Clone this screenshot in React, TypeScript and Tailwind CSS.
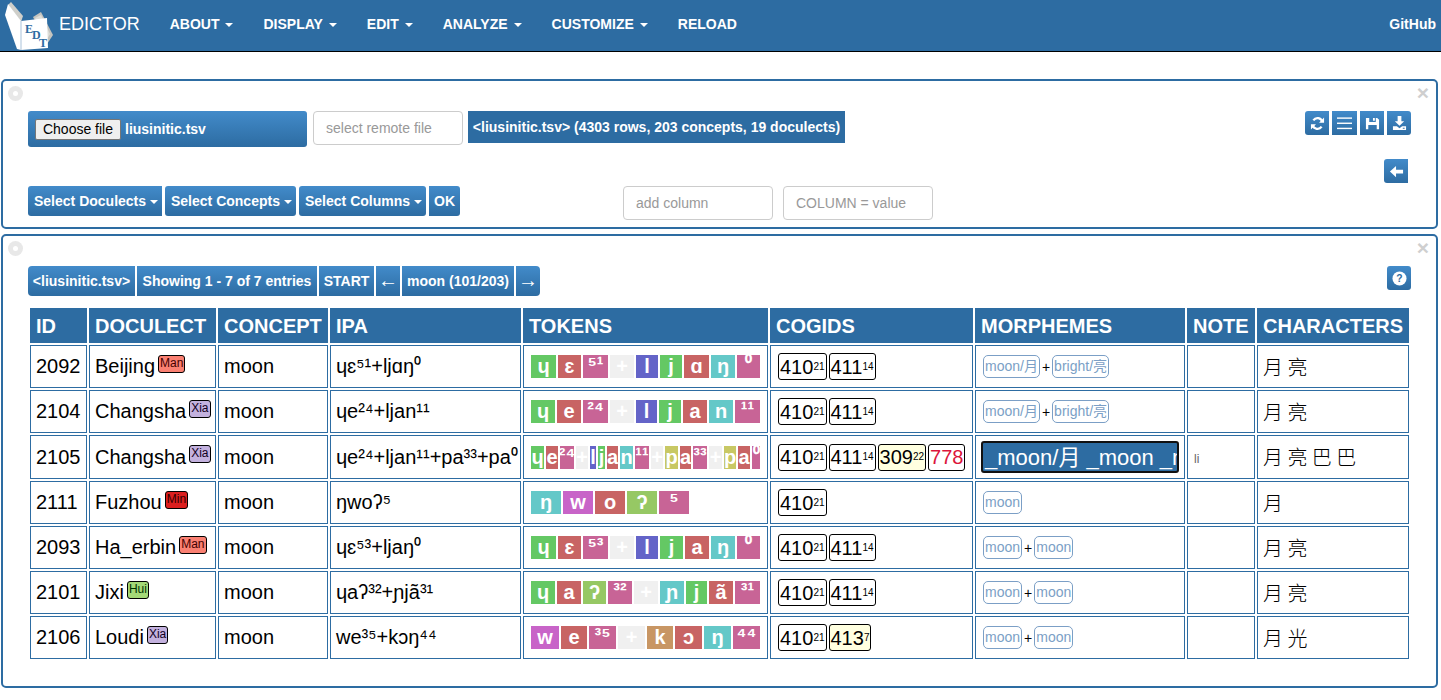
const navItems = [
  { label: "ABOUT", caret: true },
  { label: "DISPLAY", caret: true },
  { label: "EDIT", caret: true },
  { label: "ANALYZE", caret: true },
  { label: "CUSTOMIZE", caret: true },
  { label: "RELOAD", caret: false },
];

const GRAD = "bg-gradient-to-b from-[#428bca] to-[#2d6ca2]";

const GREEN = "bg-[#64c864]";
const RED = "bg-[#c86464]";
const PINK = "bg-[#c86496]";
const GREY = "bg-[#f0f0f0]";
const BLUE = "bg-[#6464c8]";
const TEAL = "bg-[#64c8c8]";
const PURPLE = "bg-[#c864c8]";
const LIME = "bg-[#96c864]";
const OLIVE = "bg-[#c8c864]";
const TAN = "bg-[#c89664]";

type Token = [string, string, string];

type Row = {
  id: number;
  doculect: string;
  badge: string;
  badgeClass: string;
  ipa: string;
  tokens: Token[];
  cogids: { n: string; sup?: string; box?: string }[];
  morphemes: string[] | null;
  note?: string;
  chars: string;
};

const MAN = "bg-[#fa8072] text-[#400]";
const XIA = "bg-[#c3b1de] text-[#102]";
const MIN = "bg-[#dc1f1f] text-[#300]";
const HUI = "bg-[#a4d977] text-[#030]";

const cog410 = { n: "410", sup: "21" };
const cog411 = { n: "411", sup: "14" };

const rows: Row[] = [
  {
    id: 2092,
    doculect: "Beijing",
    badge: "Man",
    badgeClass: MAN,
    ipa: "ɥɛ⁵¹+ljɑŋ⁰",
    tokens: [
      ["ɥ", GREEN, "w-[25px]"], ["ɛ", RED, "w-[23px]"], ["⁵¹", PINK, "w-[25px]"], ["+", GREY, "w-[24px]"],
      ["l", BLUE, "w-[22px]"], ["j", GREEN, "w-[22px]"], ["ɑ", RED, "w-[25px]"], ["ŋ", TEAL, "w-[24px]"], ["⁰", PINK, "w-[23px]"],
    ],
    cogids: [cog410, cog411],
    morphemes: ["moon/月", "bright/亮"],
    chars: "月 亮",
  },
  {
    id: 2104,
    doculect: "Changsha",
    badge: "Xia",
    badgeClass: XIA,
    ipa: "ɥe²⁴+ljan¹¹",
    tokens: [
      ["ɥ", GREEN, "w-[24px]"], ["e", RED, "w-[24px]"], ["²⁴", PINK, "w-[25px]"], ["+", GREY, "w-[24px]"],
      ["l", BLUE, "w-[21px]"], ["j", GREEN, "w-[22px]"], ["a", RED, "w-[24px]"], ["n", TEAL, "w-[24px]"], ["¹¹", PINK, "w-[25px]"],
    ],
    cogids: [cog410, cog411],
    morphemes: ["moon/月", "bright/亮"],
    chars: "月 亮",
  },
  {
    id: 2105,
    doculect: "Changsha",
    badge: "Xia",
    badgeClass: XIA,
    ipa: "ɥe²⁴+ljan¹¹+pa³³+pa⁰",
    tokens: [
      ["ɥ", GREEN, "w-[13px]"], ["e", RED, "w-[12px]"], ["²⁴", PINK, "w-[14px]"], ["+", GREY, "w-[12px]"],
      ["l", BLUE, "w-[6px]"], ["j", GREEN, "w-[7px]"], ["a", RED, "w-[11px]"], ["n", TEAL, "w-[13px]"], ["¹¹", PINK, "w-[14px]"],
      ["+", GREY, "w-[12px]"], ["p", OLIVE, "w-[13px]"], ["a", RED, "w-[11px]"], ["³³", PINK, "w-[14px]"], ["+", GREY, "w-[13px]"],
      ["p", OLIVE, "w-[12px]"], ["a", RED, "w-[12px]"], ["⁰", PINK, "w-[8px]"],
    ],
    cogids: [cog410, cog411, { n: "309", sup: "22", box: "bg-[#ffffe0]" }, { n: "778", box: "text-[#dc143c]" }],
    morphemes: null,
    note: "li",
    chars: "月 亮 巴 巴",
  },
  {
    id: 2111,
    doculect: "Fuzhou",
    badge: "Min",
    badgeClass: MIN,
    ipa: "ŋwoʔ⁵",
    tokens: [
      ["ŋ", TEAL, "w-[30px]"], ["w", PURPLE, "w-[30px]"], ["o", RED, "w-[30px]"], ["ʔ", LIME, "w-[30px]"], ["⁵", PINK, "w-[30px]"],
    ],
    cogids: [cog410],
    morphemes: ["moon"],
    chars: "月",
  },
  {
    id: 2093,
    doculect: "Ha_erbin",
    badge: "Man",
    badgeClass: MAN,
    ipa: "ɥɛ⁵³+ljaŋ⁰",
    tokens: [
      ["ɥ", GREEN, "w-[25px]"], ["ɛ", RED, "w-[23px]"], ["⁵³", PINK, "w-[25px]"], ["+", GREY, "w-[24px]"],
      ["l", BLUE, "w-[22px]"], ["j", GREEN, "w-[23px]"], ["a", RED, "w-[24px]"], ["ŋ", TEAL, "w-[24px]"], ["⁰", PINK, "w-[23px]"],
    ],
    cogids: [cog410, cog411],
    morphemes: ["moon", "moon"],
    chars: "月 亮",
  },
  {
    id: 2101,
    doculect: "Jixi",
    badge: "Hui",
    badgeClass: HUI,
    ipa: "ɥaʔ³²+ɲjã³¹",
    tokens: [
      ["ɥ", GREEN, "w-[24px]"], ["a", RED, "w-[24px]"], ["ʔ", LIME, "w-[23px]"], ["³²", PINK, "w-[24px]"], ["+", GREY, "w-[24px]"],
      ["ɲ", TEAL, "w-[24px]"], ["j", GREEN, "w-[21px]"], ["ã", RED, "w-[24px]"], ["³¹", PINK, "w-[25px]"],
    ],
    cogids: [cog410, cog411],
    morphemes: ["moon", "moon"],
    chars: "月 亮",
  },
  {
    id: 2106,
    doculect: "Loudi",
    badge: "Xia",
    badgeClass: XIA,
    ipa: "we³⁵+kɔŋ⁴⁴",
    tokens: [
      ["w", PURPLE, "w-[28px]"], ["e", RED, "w-[26px]"], ["³⁵", PINK, "w-[27px]"], ["+", GREY, "w-[27px]"],
      ["k", TAN, "w-[26px]"], ["ɔ", RED, "w-[27px]"], ["ŋ", TEAL, "w-[27px]"], ["⁴⁴", PINK, "w-[27px]"],
    ],
    cogids: [cog410, { n: "413", sup: "7", box: "bg-[#ffffe0]" }],
    morphemes: ["moon", "moon"],
    chars: "月 光",
  },
];

const columns = [
  { label: "ID", w: "w-[57px]" },
  { label: "DOCULECT", w: "w-[127px]" },
  { label: "CONCEPT", w: "w-[110px]" },
  { label: "IPA", w: "w-[191px]" },
  { label: "TOKENS", w: "w-[245px]" },
  { label: "COGIDS", w: "w-[203px]" },
  { label: "MORPHEMES", w: "w-[210px]" },
  { label: "NOTE", w: "w-[68px]" },
  { label: "CHARACTERS", w: "w-[152px]" },
];

function Caret() {
  return <span className="ml-[6px] inline-block align-middle border-x-4 border-t-4 border-x-transparent border-t-current" />;
}

function Logo() {
  return (
    <svg width="54" height="52" viewBox="0 0 54 52" className="shrink-0">
      <path d="M33 17 L41 12 L53 35 L47 44 Z" fill="#c4c4bf" />
      <path d="M35 18 L41 15 L50 34 L46 41 Z" fill="#deded8" />
      <path d="M8 5 L11 2 L23 16 L21 22 Z" fill="#cfcfca" />
      <path d="M5 15 L8 4 L21 21 L21 50 L17 49 Z" fill="#ffffff" />
      <path d="M21 21 L47 18 L48 48 L21 50 Z" fill="#ffffff" />
      <path d="M21 21 L21 50" stroke="#a9c2da" strokeWidth="1" />
      <text x="25" y="33" fontFamily="'Liberation Serif', serif" fontWeight="700" fontSize="12" fill="#2d6ca2">E</text>
      <text x="32" y="39" fontFamily="'Liberation Serif', serif" fontWeight="700" fontSize="12" fill="#2d6ca2">D</text>
      <text x="39" y="47" fontFamily="'Liberation Serif', serif" fontWeight="700" fontSize="12" fill="#2d6ca2">T</text>
    </svg>
  );
}

function PanelChrome() {
  return (
    <>
      <span className="absolute left-[5px] top-[5px] flex h-[15px] w-[15px] items-center justify-center rounded-full bg-[#e8e8e8]">
        <span className="h-[5px] w-[5px] rounded-full bg-white" />
      </span>
      <span className="absolute right-[7px] top-[1px] text-[21px] font-bold leading-[21px] text-[#cfcfcf]">×</span>
    </>
  );
}

function IconBtn({ className, children }: { className: string; children: React.ReactNode }) {
  return <button className={`flex h-6 w-6 items-center justify-center ${GRAD} ${className}`}>{children}</button>;
}

function SelectBtn({ label, className }: { label: string; className: string }) {
  return (
    <button className={`h-[30px] text-left text-sm font-bold leading-[30px] text-white ${GRAD} ${className}`}>
      {label}
      {label !== "OK" && <span className="ml-[4px] inline-block align-middle border-x-4 border-t-4 border-x-transparent border-t-current" />}
    </button>
  );
}

function TextBox({ placeholder, className }: { placeholder: string; className: string }) {
  return (
    <input
      readOnly
      placeholder={placeholder}
      className={`h-[34px] w-[150px] rounded border border-[#ccc] bg-white px-3 text-sm placeholder:text-[#999] ${className}`}
    />
  );
}

function MiniBtn({ label, className }: { label: string; className: string }) {
  return (
    <button className={`h-[30px] whitespace-nowrap text-center font-bold text-white ${GRAD} ${className}`}>
      {label}
    </button>
  );
}

const cellClass = "border border-[#2d6ca2] px-[5px] align-middle";
const isTone = /[⁰¹²³⁴⁵⁶⁷⁸⁹]/;

export default function App() {
  return (
    <div className="min-h-[700px] bg-white font-['Liberation_Sans',Arial,sans-serif] text-black">
      <header className="flex h-[52px] items-center border-b border-black bg-[#2d6ca2] text-white">
        <div className="flex items-center">
          <Logo />
          <span className="ml-[5px] pb-[4px] text-lg">EDICTOR</span>
        </div>
        <nav className="ml-[15px] flex items-center pb-[4px]">
          {navItems.map((item) => (
            <span key={item.label} className="whitespace-nowrap px-[15px] text-sm font-bold">
              {item.label}
              {item.caret && <Caret />}
            </span>
          ))}
        </nav>
        <span className="ml-auto mr-[5px] pb-[4px] text-sm font-bold">GitHub</span>
      </header>

      <section className="relative ml-px mr-[3px] mt-[27px] h-[150px] rounded-[5px] border-2 border-[#2d6ca2]">
        <PanelChrome />
        <div className="flex items-start pl-[25px] pr-[25px] pt-[30px]">
          <div className={`flex h-9 w-[279px] items-center rounded-[3px] pl-[7px] ${GRAD}`}>
            <span className="flex h-[21px] w-[86px] items-center justify-center rounded-[2px] border border-[#767676] bg-[#efefef] text-sm text-black">
              Choose file
            </span>
            <span className="ml-[4px] text-sm font-bold text-white">liusinitic.tsv</span>
          </div>
          <TextBox placeholder="select remote file" className="ml-[6px]" />
          <div className="ml-[5px] flex h-8 w-[377px] items-center justify-center whitespace-nowrap bg-[#2d6ca2] text-sm font-bold text-white">
            {"<liusinitic.tsv> (4303 rows, 203 concepts, 19 doculects)"}
          </div>
          <div className="ml-auto flex gap-[3px]">
            <IconBtn className="rounded-l-[3px]">
              <svg viewBox="0 0 16 16" className="h-[15px] w-[15px]" fill="none" stroke="white" strokeWidth="2.4">
                <path d="M13.2 6.2A5.4 5.4 0 0 0 3.6 4.6" />
                <path d="M2.8 9.8a5.4 5.4 0 0 0 9.6 1.6" />
                <path d="M15 1.5v5.6H9.6z" fill="white" stroke="none" />
                <path d="M1 14.5V8.9h5.4z" fill="white" stroke="none" />
              </svg>
            </IconBtn>
            <IconBtn className="w-[25px]">
              <svg viewBox="0 0 16 16" className="h-[15px] w-[15px]" fill="white">
                <rect x="0" y="1.5" width="16" height="1.5" />
                <rect x="0" y="7" width="16" height="1.5" />
                <rect x="0" y="12.5" width="16" height="1.5" />
              </svg>
            </IconBtn>
            <IconBtn className="">
              <svg viewBox="0 0 16 16" className="h-[15px] w-[15px]" fill="white">
                <path d="M1 2h3.5v4.5h7V2H13l2 2v10h-2.5V9.5h-9V14H1zM8.5 2h2v3h-2z" />
              </svg>
            </IconBtn>
            <IconBtn className="rounded-r-[3px]">
              <svg viewBox="0 0 16 16" className="h-[15px] w-[15px]" fill="white">
                <path d="M6 0h4v5.5h3L8 10.5 3 5.5h3zM1 11h4.2L8 13l2.8-2H15v4H1zM11.5 12.5h2v1.2h-2z" fillRule="evenodd" />
              </svg>
            </IconBtn>
          </div>
        </div>
        <div className="flex justify-end pr-[28px] pt-[12px]">
          <IconBtn className="rounded-l-[3px]">
            <svg viewBox="0 0 16 16" className="h-[15px] w-[15px]" fill="white">
              <path d="M1 8l6.5-6v4H15v4H7.5v4z" />
            </svg>
          </IconBtn>
        </div>
        <div className="flex items-start pl-[25px] pt-[3px]">
          <div className="flex gap-[3px]">
            <SelectBtn label="Select Doculects" className="w-[134px] rounded-l-[3px] pl-[6px]" />
            <SelectBtn label="Select Concepts" className="w-[131px] rounded-[3px] pl-[6px]" />
            <SelectBtn label="Select Columns" className="w-[127px] rounded-[3px] pl-[6px]" />
            <SelectBtn label="OK" className="w-[31px] rounded-r-[3px] pl-[5px]" />
          </div>
          <TextBox placeholder="add column" className="ml-[163px]" />
          <TextBox placeholder="COLUMN = value" className="ml-[10px]" />
        </div>
      </section>

      <section className="relative ml-px mr-[3px] mt-[5px] h-[454px] rounded-[5px] border-2 border-[#2d6ca2]">
        <PanelChrome />
        <div className="flex items-start pl-[25px] pr-[25px] pt-[30px]">
          <div className="flex gap-[2px]">
            <MiniBtn label="<liusinitic.tsv>" className="w-[107px] rounded-l-[4px] text-sm" />
            <MiniBtn label="Showing 1 - 7 of 7 entries" className="w-[180px] text-sm" />
            <MiniBtn label="START" className="w-[55px] text-sm" />
            <MiniBtn label="←" className="w-[24px] pb-[4px] text-xl font-normal" />
            <MiniBtn label="moon (101/203)" className="w-[112px] text-sm" />
            <MiniBtn label="→" className="w-[24px] rounded-r-[4px] pb-[4px] text-xl font-normal" />
          </div>
          <IconBtn className="ml-auto rounded-[3px]">
            <svg viewBox="0 0 16 16" className="h-[15px] w-[15px]">
              <circle cx="8" cy="8" r="7.5" fill="white" />
              <text x="8" y="12" textAnchor="middle" fontFamily="'Liberation Sans', sans-serif" fontWeight="700" fontSize="11" fill="#2d6ca2">?</text>
            </svg>
          </IconBtn>
        </div>
        <table className="ml-[25px] mt-[10px] w-[1383px] table-fixed border-separate border-spacing-[2px]">
          <colgroup>
            {columns.map((col) => (
              <col key={col.label} className={col.w} />
            ))}
          </colgroup>
          <thead>
            <tr className="h-[35px]">
              {columns.map((col) => (
                <th key={col.label} className="whitespace-nowrap bg-[#2d6ca2] px-[6px] text-left text-xl font-bold text-white">
                  {col.label}
                </th>
              ))}
            </tr>
          </thead>
          <tbody>
            {rows.map((row) => (
              <tr key={row.id} className={row.morphemes ? "h-[43px] text-xl" : "h-[44px] text-xl"}>
                <td className={`${cellClass} pb-px`}>{row.id}</td>
                <td className={`${cellClass} pb-px`}>
                  <span className="whitespace-nowrap">
                    {row.doculect}
                    <span className={`relative -top-[4px] ml-[3px] inline-block h-[18px] rounded-[3px] border border-black px-px align-middle text-xs leading-[15px] ${row.badgeClass}`}>
                      {row.badge}
                    </span>
                  </span>
                </td>
                <td className={`${cellClass} pb-px`}>moon</td>
                <td className={`${cellClass} whitespace-nowrap pb-px`}>{row.ipa}</td>
                <td className={`${cellClass} pl-[7px]`}>
                  <div className="flex gap-[2px]">
                    {row.tokens.map(([t, color, width], i) => (
                      <span
                        key={i}
                        className={`flex h-[23px] justify-center text-xl font-bold text-white ${isTone.test(t) ? "leading-[19px]" : "leading-[23px]"} ${color} ${width}`}
                      >
                        {t}
                      </span>
                    ))}
                  </div>
                </td>
                <td className={`${cellClass} pl-[7px]`}>
                  <div className="flex gap-[2px]">
                    {row.cogids.map((cog, i) => (
                      <span key={i} className={`flex h-[27px] items-center rounded-[3px] border border-black px-px leading-none ${cog.box ?? ""}`}>
                        {cog.n}
                        {cog.sup && <span className="text-[10px]">{cog.sup}</span>}
                      </span>
                    ))}
                  </div>
                </td>
                <td className={`${cellClass} pl-[7px]`}>
                  {row.morphemes ? (
                    <div className="flex items-center gap-[2px] text-black">
                      {row.morphemes.map((m, i) => (
                        <span key={i} className="flex items-center gap-[2px]">
                          {i > 0 && <span className="text-sm">+</span>}
                          <span className="h-[23px] rounded-[5px] border border-[#7b9fc6] px-px font-['Liberation_Sans','Noto_Sans_CJK_SC',sans-serif] text-sm leading-[21px] text-[#7b9fc6]">
                            {m}
                          </span>
                        </span>
                      ))}
                    </div>
                  ) : (
                    <div className="-ml-[2px] h-8 w-[198px] overflow-hidden whitespace-nowrap rounded-[3px] border-2 border-[#111] bg-[#2d6ca2] pl-[2px] font-['Liberation_Sans','Noto_Sans_CJK_SC',sans-serif] text-[22px] leading-[30px] text-white">
                      _moon/月 _moon _moon
                    </div>
                  )}
                </td>
                <td className={`${cellClass} pl-[6px] pt-[3px] text-xs text-[#666]`}>{row.note}</td>
                <td className={`${cellClass} font-['Noto_Sans_CJK_SC',sans-serif] font-light`}>{row.chars}</td>
              </tr>
            ))}
          </tbody>
        </table>
      </section>
    </div>
  );
}
